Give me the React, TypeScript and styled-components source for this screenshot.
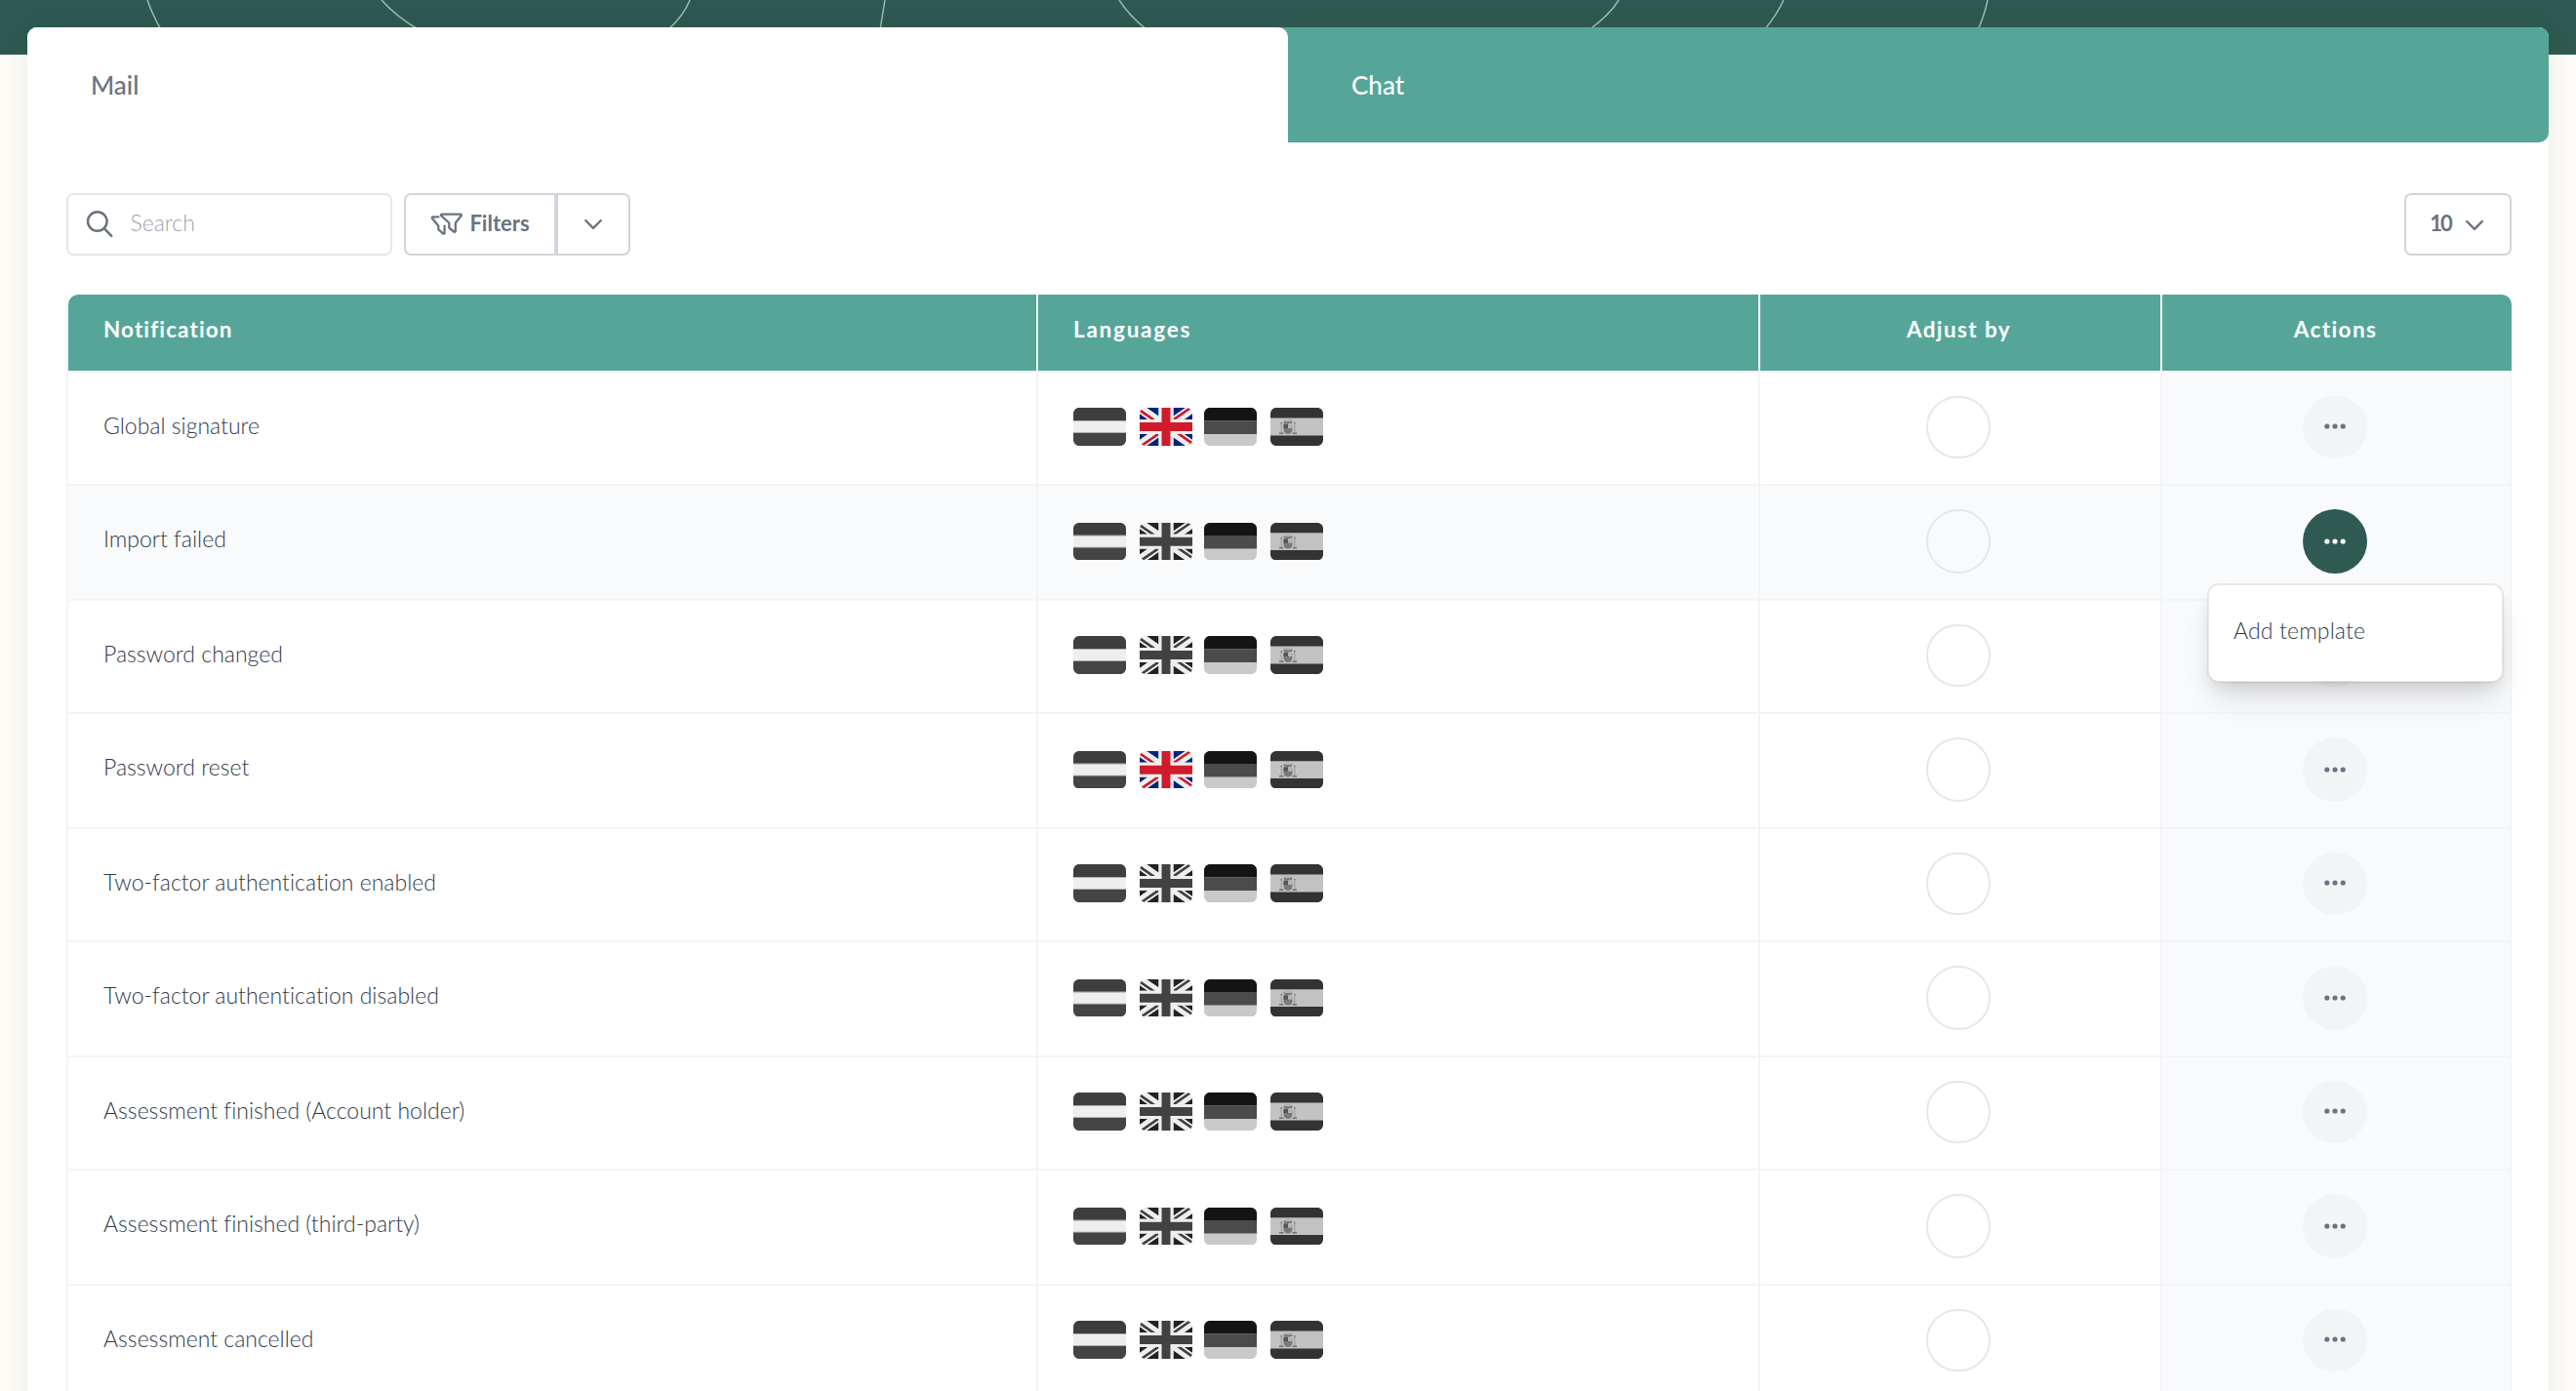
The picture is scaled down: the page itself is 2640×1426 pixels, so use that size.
import React from 'react';
import styled, { createGlobalStyle, css } from 'styled-components';

const color = {
  pine: '#2e5a52',
  teal: '#55a698',
  cream: '#fffdf8',
  line: '#f3f4f6',
  soft: '#f9fafc',
  border: '#e5e7eb',
  borderStrong: '#d1d5db',
  slate: '#6b7280',
  ink: '#303a4b',
};

const GlobalStyle = createGlobalStyle`
  *, *::before, *::after { box-sizing: border-box; }
  body {
    margin: 0;
    background: ${color.cream};
    font-family: Lato, "Open Sans", sans-serif;
    font-weight: 300;
    font-variant-ligatures: none;
    color: ${color.ink};
  }
  button { font: inherit; margin: 0; padding: 0; background: none; border: 0; }
`;

const Page = styled.div`
  position: relative;
  height: 1426px;
  overflow: hidden;
  padding: 28px 28px 0;
`;

const Banner = styled.div`
  position: absolute;
  inset: 0 0 auto;
  height: 56px;
  background: ${color.pine};

  svg { display: block; }
`;

const Card = styled.main`
  position: relative;
  height: 1500px;
  background: #fff;
  border-radius: 10px;
  box-shadow: 0 0 36px rgba(30, 30, 60, 0.09);
`;

const Tabs = styled.nav`
  display: grid;
  grid-template-columns: 1fr 1fr;
  height: 118px;
  background: linear-gradient(90deg, #fff 40%, ${color.teal} 40%);
  border-radius: 10px 10px 10px 0;
  overflow: hidden;
`;

const Tab = styled.a<{ $active?: boolean }>`
  padding: 43px 65px 0;
  font-size: 26px;
  line-height: 32px;
  font-weight: 500;
  color: ${p => (p.$active ? color.slate : '#fff')};
  background: ${p => (p.$active ? '#fff' : 'transparent')};
  border-top-right-radius: ${p => (p.$active ? '10px' : '0')};
`;

const Toolbar = styled.div`
  display: flex;
  align-items: center;
  height: 64px;
  margin: 52px 38px 40px 40px;
`;

const SearchBox = styled.label`
  display: flex;
  align-items: center;
  width: 334px;
  height: 64px;
  padding-left: 18px;
  margin-right: 12px;
  border: 2px solid ${color.border};
  border-radius: 7px;

  svg { margin-bottom: 1px; }
`;

const SearchInput = styled.input`
  width: 220px;
  margin: 0 0 5px 16.5px;
  padding: 0;
  border: 0;
  outline: 0;
  background: none;
  font: 300 23px/28px Lato, sans-serif;
  color: ${color.ink};

  &::placeholder { color: #9ca3af; opacity: 1; }
`;

const ButtonGroup = styled.div`
  display: flex;
`;

const ToolButton = styled.button<{ $w: number; $side?: 'left' | 'right' }>`
  display: flex;
  align-items: center;
  justify-content: center;
  width: ${p => p.$w}px;
  height: 64px;
  border: 2px solid ${color.borderStrong};
  border-radius: ${p => (p.$side === 'left' ? '7px 0 0 7px' : p.$side === 'right' ? '0 7px 7px 0' : '7px')};
  color: ${color.slate};
  font-size: 22px;
  line-height: 28px;
  font-weight: 700;
`;

const ButtonLabel = styled.span<{ $tight?: boolean }>`
  padding-bottom: 3px;
  margin-left: ${p => (p.$tight ? '-2px' : '6px')};
  letter-spacing: ${p => (p.$tight ? '-2px' : '0')};
`;

const PageSize = styled.div`
  margin-left: auto;

  svg { margin: 1px 0 0 14px; }
`;

const Table = styled.section`
  margin: 0 38px 0 40px;
  border-left: 2px solid ${color.line};
`;

const columns = css`
  display: grid;
  grid-template-columns: 992px 740px 412px 360px;
`;

const HeadRow = styled.div`
  ${columns}
  height: 78px;
  background: ${color.teal};
  border-radius: 10px 10px 0 0;
`;

const HeadCell = styled.div<{ $center?: boolean; $tracking: number }>`
  padding: 22px ${p => (p.$center ? 39 : 36)}px 0 36px;
  text-align: ${p => (p.$center ? 'center' : 'left')};
  font-size: 22.5px;
  line-height: 28px;
  font-weight: 700;
  letter-spacing: ${p => p.$tracking}px;
  color: #fff;

  & + & { border-left: 2px solid #fff; }
`;

const BodyRow = styled.div<{ $tall: boolean; $hover?: boolean }>`
  ${columns}
  height: ${p => (p.$tall ? 118 : 116)}px;
  border-top: 2px solid ${color.line};
  background: ${p => (p.$hover ? color.soft : '#fff')};
`;

const Cell = styled.div`
  & + & { border-left: 2px solid ${color.line}; }
`;

const NameCell = styled(Cell)`
  padding: 40px 36px 0;
  font-size: 23px;
  line-height: 28px;
`;

const FlagCell = styled(Cell)<{ $tall: boolean }>`
  display: flex;
  align-items: flex-start;
  gap: 14px;
  padding: ${p => (p.$tall ? 38 : 36)}px 36px 0;
`;

const CenterCell = styled(Cell)`
  display: flex;
  justify-content: center;
  padding: 24px 4px 0 0;
`;

const ActionCell = styled(CenterCell)`
  position: relative;
  padding-right: 2px;
  background: ${color.soft};
  border-right: 2px solid ${color.line};
`;

const Ring = styled.span<{ $tall: boolean }>`
  width: 66px;
  height: ${p => (p.$tall ? 66 : 64)}px;
  border: 2px solid ${color.border};
  border-radius: 33px;
`;

const DotsButton = styled.button<{ $tall: boolean; $open?: boolean }>`
  display: flex;
  align-items: center;
  justify-content: center;
  width: 66px;
  height: ${p => (p.$tall ? 66 : 64)}px;
  padding-bottom: ${p => (p.$tall ? 0 : 2)}px;
  border-radius: 33px;
  color: ${p => (p.$open ? '#fff' : color.slate)};
  background: ${p => (p.$open ? color.pine : '#f3f4f6')};
`;

const Flag = styled.svg<{ $gray?: boolean; $tall: boolean }>`
  flex: none;
  width: 54px;
  height: ${p => (p.$tall ? 38.4 : 39)}px;
  filter: ${p => (p.$gray ? 'grayscale(1)' : 'none')};

  &:nth-child(3) { margin-left: -2px; }
`;

const Menu = styled.div`
  position: absolute;
  z-index: 2;
  top: 100px;
  right: 6px;
  width: 304px;
  height: 102px;
  padding: 32px 25px;
  background: #fff;
  background-clip: padding-box;
  border: 2px solid rgba(0, 0, 0, 0.07);
  border-radius: 12px;
  box-shadow: 0 20px 32px -6px rgba(0, 0, 0, 0.13), 0 8px 16px -6px rgba(0, 0, 0, 0.11);
  font-size: 23px;
  line-height: 28px;
  letter-spacing: 0.15px;
`;

const BannerLines = () => (
  <svg width="2640" height="56" viewBox="0 0 2640 56" fill="none" stroke="#9dbdb0" strokeWidth="1.5">
    <path d="M151 0Q157 17 166 32M391 0Q406 17 430 31M707 0Q701 16 684 31M907 0L902 30M1147 0Q1157 16 1176 31M1659 0Q1650 15 1628 31M1828 0Q1821 15 1808 31M2037 0Q2034 15 2027 31" />
  </svg>
);

const SearchIcon = () => (
  <svg width="29" height="29" viewBox="0 0 29 29" fill="none" stroke={color.slate} strokeWidth="2.5" strokeLinecap="round">
    <circle cx="11.8" cy="12" r="9.8" />
    <path d="M18.8 19.2l7.4 7.6" />
  </svg>
);

const FunnelsIcon = () => (
  <svg width="34" height="24" viewBox="0 0 34 24" fill="none" stroke="currentColor" strokeWidth="2.3" strokeLinecap="round" strokeLinejoin="round">
    <path d="M12 1.6h18.8c1.1 0 1.4.9.8 1.7L25.8 10.4v8.4c0 1-.9 1.4-1.7.7l-4.8-4v-5L11.2 3.1c-.6-.7-.2-1.5.8-1.5z" />
    <path d="M8.4 4.4H2.8c-.9 0-1.3.8-.7 1.6l6.2 7.6v3.6l4.7 4.2c.7.6 1.6.2 1.6-.7v-7" />
  </svg>
);

const Chevron = () => (
  <svg width="20" height="12" viewBox="0 0 20 12" fill="none" stroke="currentColor" strokeWidth="2.4" strokeLinecap="round" strokeLinejoin="round">
    <path d="M2.2 2L10 9.8 17.8 2" />
  </svg>
);

const Dots = () => (
  <svg width="24" height="8" viewBox="0 0 24 8" fill="currentColor">
    <circle cx="3.8" cy="4" r="2.6" />
    <circle cx="12" cy="4" r="2.6" />
    <circle cx="20.2" cy="4" r="2.6" />
  </svg>
);

type FlagProps = { gray?: boolean; tall: boolean };

const frame = (p: FlagProps) => ({ $gray: p.gray, $tall: p.tall, viewBox: '0 5 36 26', preserveAspectRatio: 'none' });

const DutchFlag = (p: FlagProps) => (
  <Flag {...frame(p)}>
    <path fill="#EEE" d="M0 14h36v8H0z" />
    <path fill="#AE1F28" d="M32 5H4C1.791 5 0 6.791 0 9v4.7h36V9c0-2.209-1.791-4-4-4z" />
    <path fill="#999" d="M0 13.6h36v.5H0zM0 21.8h36v.5H0z" />
    <path fill="#20478B" d="M4 31h28c2.209 0 4-1.791 4-4v-4.7H0V27c0 2.209 1.791 4 4 4z" />
  </Flag>
);

const BritishFlag = (p: FlagProps) => (
  <Flag {...frame(p)}>
    <path fill="#00247D" d="M0 9.059V13h5.628zM4.664 31H13v-5.837zM23 25.164V31h8.335zM0 23v3.941L5.63 23zM31.337 5H23v5.837zM36 26.942V23h-5.631zM36 13V9.059L30.371 13zM13 5H4.664L13 10.837z" />
    <path fill="#CF1B2B" d="M25.14 23l9.712 6.801c.471-.479.808-1.082.99-1.749L28.627 23H25.14zM13 23h-2.141l-9.711 6.8c.521.53 1.189.909 1.938 1.085L13 23.943V23zm10-10h2.141l9.711-6.8c-.521-.53-1.188-.909-1.937-1.085L23 12.057V13zm-12.141 0L1.148 6.2C.677 6.68.34 7.282.157 7.949L7.372 13h3.487z" />
    <path fill="#EEE" d="M36 21H21v10h2v-5.836L31.335 31H32c1.117 0 2.126-.461 2.852-1.199L25.14 23h3.487l7.215 5.052c.093-.337.158-.686.158-1.052v-.058L30.369 23H36v-2zM0 21v2h5.63L0 26.941V27c0 1.091.439 2.078 1.148 2.8l9.711-6.8H13v.943l-9.914 6.941c.294.07.598.116.914.116h.664L13 25.163V31h2V21H0zM36 9c0-1.091-.439-2.078-1.148-2.8L25.141 13H23v-.943l9.915-6.942C32.62 5.046 32.316 5 32 5h-.663L23 10.837V5h-2v10h15v-2h-5.629L36 9.059V9zM13 5v5.837L4.664 5H4c-1.118 0-2.126.461-2.852 1.2l9.711 6.8H7.372L.157 7.949C.065 8.286 0 8.634 0 9v.059L5.628 13H0v2h15V5h-2z" />
    <path fill="#CF1B2B" d="M21 15V5h-6v10H0v6h15v10h6V21h15v-6z" />
  </Flag>
);

const GermanFlag = (p: FlagProps) => (
  <Flag {...frame(p)}>
    <path fill="#FFCD05" d="M0 27c0 2.209 1.791 4 4 4h28c2.209 0 4-1.791 4-4v-4.2H0V27z" />
    <path fill="#ED1F24" d="M0 13.8h36V23H0z" />
    <path fill="#141414" d="M32 5H4C1.791 5 0 6.791 0 9v4.8h36V9c0-2.209-1.791-4-4-4z" />
  </Flag>
);

const SpanishFlag = (p: FlagProps) => (
  <Flag {...frame(p)}>
    <path fill="#C60A1D" d="M36 27c0 2.209-1.791 4-4 4H4c-2.209 0-4-1.791-4-4V9c0-2.209 1.791-4 4-4h28c2.209 0 4 1.791 4 4v18z" />
    <path fill="#FFC400" d="M0 12h36v12H0z" />
    <path fill="#EA596E" d="M9 17v3c0 1.657 1.343 3 3 3s3-1.343 3-3v-3H9z" />
    <path fill="#F4A2B2" d="M12 16h3v3h-3z" />
    <path fill="#DD2E44" d="M9 16h3v3H9z" />
    <ellipse fill="#EA596E" cx="12" cy="14.5" rx="3" ry="1.5" />
    <ellipse fill="#FFAC33" cx="12" cy="13.75" rx="3" ry=".75" />
    <path fill="#99AAB5" d="M7 16h1v7H7zm9 0h1v7h-1z" />
    <path fill="#66757F" d="M6 22h3v1H6zm9 0h3v1h-3zm-8-7h1v1H7zm9 0h1v1h-1z" />
  </Flag>
);

type Notification = { name: string; english?: boolean; open?: boolean };

const notifications: Notification[] = [
  { name: 'Global signature', english: true },
  { name: 'Import failed', open: true },
  { name: 'Password changed' },
  { name: 'Password reset', english: true },
  { name: 'Two-factor authentication enabled' },
  { name: 'Two-factor authentication disabled' },
  { name: 'Assessment finished (Account holder)' },
  { name: 'Assessment finished (third-party)' },
  { name: 'Assessment cancelled' },
];

const NotificationRow = ({ item, index }: { item: Notification; index: number }) => {
  const tall = index % 2 === 1;
  return (
    <BodyRow $tall={tall} $hover={item.open}>
      <NameCell>{item.name}</NameCell>
      <FlagCell $tall={tall}>
        <DutchFlag gray tall={tall} />
        <BritishFlag gray={!item.english} tall={tall} />
        <GermanFlag gray tall={tall} />
        <SpanishFlag gray tall={tall} />
      </FlagCell>
      <CenterCell>
        <Ring $tall={tall} />
      </CenterCell>
      <ActionCell>
        <DotsButton $tall={tall} $open={item.open} aria-label="Row actions">
          <Dots />
        </DotsButton>
        {item.open && <Menu>Add template</Menu>}
      </ActionCell>
    </BodyRow>
  );
};

export default function App() {
  return (
    <Page>
      <GlobalStyle />
      <Banner>
        <BannerLines />
      </Banner>
      <Card>
        <Tabs>
          <Tab $active>Mail</Tab>
          <Tab>Chat</Tab>
        </Tabs>
        <Toolbar>
          <SearchBox>
            <SearchIcon />
            <SearchInput placeholder="Search" />
          </SearchBox>
          <ButtonGroup>
            <ToolButton $w={156} $side="left">
              <FunnelsIcon />
              <ButtonLabel>Filters</ButtonLabel>
            </ToolButton>
            <ToolButton $w={76} $side="right">
              <Chevron />
            </ToolButton>
          </ButtonGroup>
          <PageSize>
            <ToolButton $w={110}>
              <ButtonLabel $tight>10</ButtonLabel>
              <Chevron />
            </ToolButton>
          </PageSize>
        </Toolbar>
        <Table>
          <HeadRow>
            <HeadCell $tracking={1.1}>Notification</HeadCell>
            <HeadCell $tracking={1.75}>Languages</HeadCell>
            <HeadCell $center $tracking={1.4}>Adjust by</HeadCell>
            <HeadCell $center $tracking={1.4}>Actions</HeadCell>
          </HeadRow>
          {notifications.map((item, index) => (
            <NotificationRow key={item.name} item={item} index={index} />
          ))}
        </Table>
      </Card>
    </Page>
  );
}
